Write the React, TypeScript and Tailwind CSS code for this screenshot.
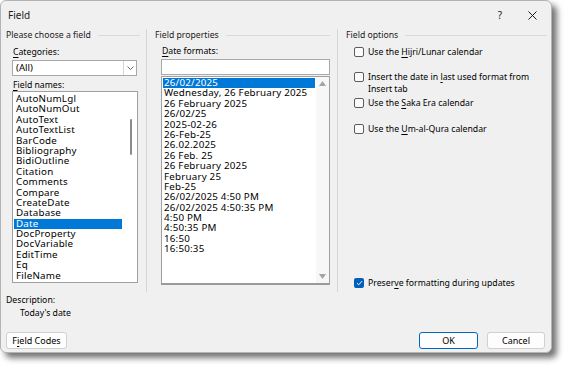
import React from "react";

const fieldNames = [
  "AutoNumLgl",
  "AutoNumOut",
  "AutoText",
  "AutoTextList",
  "BarCode",
  "Bibliography",
  "BidiOutline",
  "Citation",
  "Comments",
  "Compare",
  "CreateDate",
  "Database",
  "Date",
  "DocProperty",
  "DocVariable",
  "EditTime",
  "Eq",
  "FileName",
];

const dateFormats = [
  "26/02/2025",
  "Wednesday, 26 February 2025",
  "26 February 2025",
  "26/02/25",
  "2025-02-26",
  "26-Feb-25",
  "26.02.2025",
  "26 Feb. 25",
  "26 February 2025",
  "February 25",
  "Feb-25",
  "26/02/2025 4:50 PM",
  "26/02/2025 4:50:35 PM",
  "4:50 PM",
  "4:50:35 PM",
  "16:50",
  "16:50:35",
];

function GroupHeader({ title }: { title: string }) {
  return (
    <div className="flex items-center gap-[7px] h-[12px] leading-[12px]">
      <span className="whitespace-nowrap text-[#1b1b1b]">{title}</span>
      <div className="flex-1 h-px bg-[#dadada]" />
    </div>
  );
}

function CheckBox({ checked = false }: { checked?: boolean }) {
  if (checked) {
    return (
      <div className="w-[10px] h-[10px] rounded-[2px] bg-[#005fb8] flex items-center justify-center flex-shrink-0 mt-[1px]">
        <svg width="7" height="6" viewBox="0 0 7 6">
          <path d="M1 3.2 L2.7 4.8 L6 1.2" fill="none" stroke="white" strokeWidth="1" />
        </svg>
      </div>
    );
  }
  return (
    <div className="w-[10px] h-[10px] rounded-[2px] border border-[#5c5c5c] bg-[#fbfbfb] flex-shrink-0 mt-[1px]" />
  );
}

function Option({ children, checked }: { children: React.ReactNode; checked?: boolean }) {
  return (
    <div className="flex items-start gap-[4px] ml-[8px] leading-[12px]">
      <CheckBox checked={checked} />
      <div>{children}</div>
    </div>
  );
}

export default function App() {
  return (
    <div className="w-[567px] h-[371px] bg-white overflow-hidden font-['Noto_Sans',sans-serif] text-[8.7px] text-black">
      <div className="w-[552px] h-[353px] bg-[#f0f0f0] rounded-[6px] border border-[#b4b4b4] shadow-[5px_5px_6px_rgba(0,0,0,0.55)] flex flex-col">
        {/* Title bar */}
        <div className="h-[28px] flex items-center pl-[7px] pr-[14px]">
          <span className="text-[10px] text-[#1b1b1b]">Field</span>
          <div className="ml-auto flex items-center gap-[26px]">
            <span className="text-[10px] text-[#1b1b1b]">?</span>
            <svg width="9" height="9" viewBox="0 0 9 9">
              <path d="M0.5 0.5 L8.5 8.5 M8.5 0.5 L0.5 8.5" stroke="#1b1b1b" strokeWidth="1" />
            </svg>
          </div>
        </div>

        {/* Columns */}
        <div className="h-[263px] flex pl-[5px]">
          {/* Left */}
          <div className="w-[134px] flex flex-col">
            <GroupHeader title="Please choose a field" />
            <div className="mt-[5px] h-[12px] leading-[12px] pl-[7px]">
              <u className="underline-offset-2">C</u>ategories:
            </div>
            <div className="mt-[2px] ml-[6px] w-[125px] h-[16px] bg-white border border-[#a9a9a9] flex items-center text-[9.6px]">
              <span className="pl-[3px] flex-1">(All)</span>
              <div className="w-[13px] h-full border-l border-[#d4d4d4] flex items-center justify-center">
                <svg width="7" height="4" viewBox="0 0 7 4">
                  <path d="M0.5 0.5 L3.5 3.5 L6.5 0.5" fill="none" stroke="#555" strokeWidth="0.9" />
                </svg>
              </div>
            </div>
            <div className="mt-[3px] h-[12px] leading-[12px] pl-[7px]">
              <u className="underline-offset-2">F</u>ield names:
            </div>
            <div className="ml-[6px] w-[126px] h-[192px] bg-white border border-[#a0a0a0] flex text-[9.8px] tracking-[0.2px]">
              <div className="flex-1 pt-[2px] pl-[1px]">
                {fieldNames.map((n) => (
                  <div
                    key={n}
                    className={`h-[10.4px] leading-[10.4px] pl-[2px] w-[108px] whitespace-nowrap ${
                      n === "Date" ? "bg-[#0078d7] text-white" : ""
                    }`}
                  >
                    {n}
                  </div>
                ))}
              </div>
              <div className="w-[12px] flex justify-center pt-[27px]">
                <div className="w-[2px] h-[36px] bg-[#8b8b8b] rounded-full" />
              </div>
            </div>
          </div>

          <div className="ml-[6px] w-px bg-[#d6d6d6]" />

          {/* Middle */}
          <div className="ml-[8px] w-[175px] flex flex-col">
            <GroupHeader title="Field properties" />
            <div className="mt-[4px] h-[12px] leading-[12px] pl-[7px]">
              <u className="underline-offset-2">D</u>ate formats:
            </div>
            <div className="mt-[2px] ml-[6px] w-[169px] h-[16px] bg-white border border-[#a9a9a9]" />
            <div className="mt-[1px] ml-[6px] w-[169px] h-[209px] bg-white border border-[#a0a0a0] border-b-2 border-b-[#9a9a9a] flex text-[9.8px] tracking-[0.2px]">
              <div className="flex-1 pt-[1px] pl-[1px]">
                {dateFormats.map((d, i) => (
                  <div
                    key={i}
                    className={`h-[10.4px] leading-[10.4px] pl-[1px] w-[152px] whitespace-nowrap ${
                      i === 0 ? "bg-[#0078d7] text-white" : ""
                    }`}
                  >
                    {d}
                  </div>
                ))}
              </div>
              <div className="w-[13px] bg-[#f7f7f7] flex flex-col items-center justify-between pt-[4px] pb-[4px]">
                <svg width="7" height="5" viewBox="0 0 7 5">
                  <path d="M0 5 L3.5 0 L7 5 Z" fill="#a3a3a3" />
                </svg>
                <svg width="7" height="5" viewBox="0 0 7 5">
                  <path d="M0 0 L3.5 5 L7 0 Z" fill="#a3a3a3" />
                </svg>
              </div>
            </div>
          </div>

          <div className="ml-[7px] w-px bg-[#d6d6d6]" />

          {/* Right */}
          <div className="ml-[8px] w-[201px] flex flex-col pb-[3px]">
            <GroupHeader title="Field options" />
            <div className="mt-[5px]">
              <Option>
                Use the <u className="underline-offset-2">H</u>ijri/Lunar calendar
              </Option>
            </div>
            <div className="mt-[13px]">
              <Option>
                Insert the date in <u className="underline-offset-2">l</u>ast used format from
                <br />
                Insert tab
              </Option>
            </div>
            <div className="mt-[2px]">
              <Option>
                Use the <u className="underline-offset-2">S</u>aka Era calendar
              </Option>
            </div>
            <div className="mt-[14px]">
              <Option>
                Use the <u className="underline-offset-2">U</u>m-al-Qura calendar
              </Option>
            </div>
            <div className="mt-auto">
              <Option checked>
                Preser<u className="underline-offset-2">v</u>e formatting during updates
              </Option>
            </div>
          </div>
        </div>

        {/* Description */}
        <div className="mt-[2px] pl-[5px] h-[12px] leading-[12px]">Description:</div>
        <div className="mt-px pl-[19px] h-[12px] leading-[12px]">Today's date</div>

        {/* Buttons */}
        <div className="mt-[13px] flex pl-[5px] pr-[6px] text-[9px]">
          <button className="w-[61px] h-[17px] rounded-[3px] bg-[#fdfdfd] border border-[#d0d0d0] flex items-center justify-center">
            F<u className="underline-offset-2">i</u>eld Codes
          </button>
          <button className="ml-auto w-[59px] h-[17px] rounded-[3px] bg-[#fdfdfd] border border-[#0067c0] flex items-center justify-center">
            OK
          </button>
          <button className="ml-[9px] w-[58px] h-[17px] rounded-[3px] bg-[#fdfdfd] border border-[#d0d0d0] flex items-center justify-center">
            Cancel
          </button>
        </div>
      </div>
    </div>
  );
}
